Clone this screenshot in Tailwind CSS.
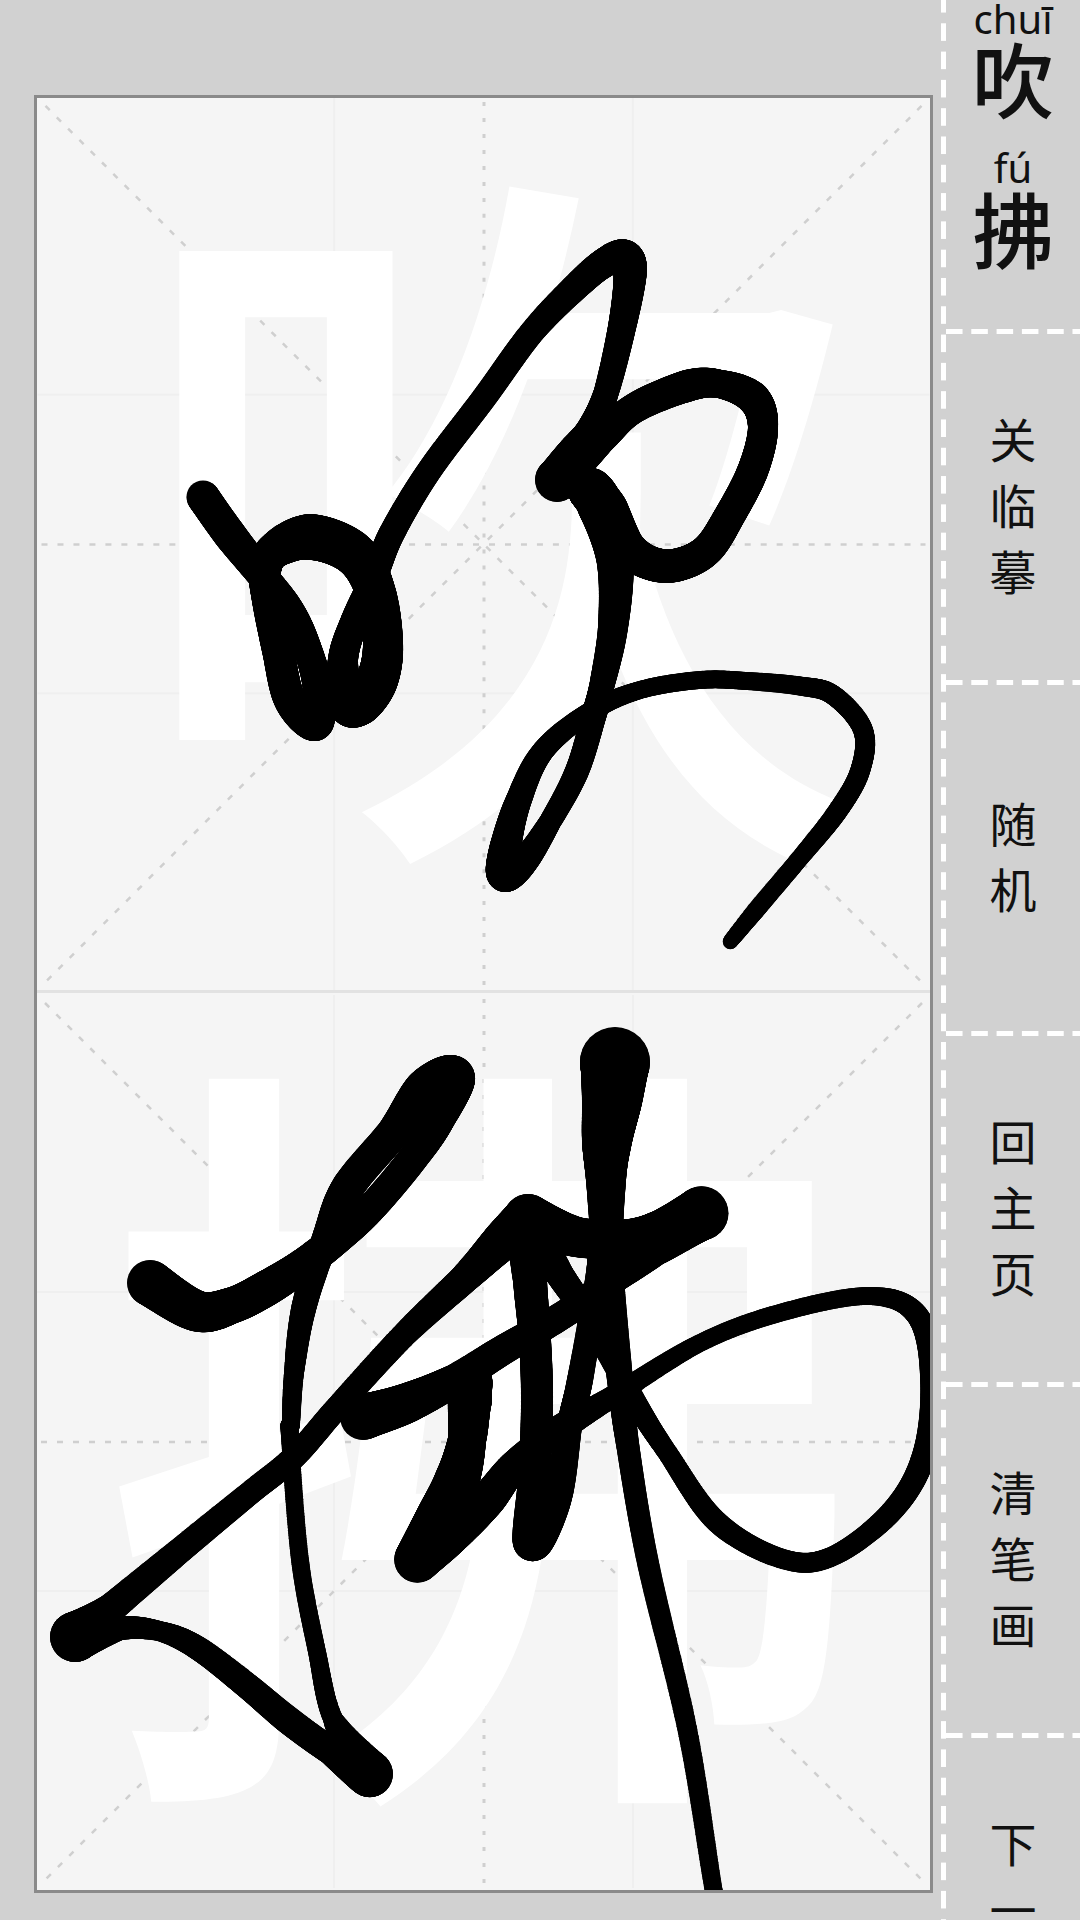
<!DOCTYPE html>
<html lang="zh">
<head>
  <meta charset="UTF-8" />
  <title>临摹</title>
  <script src="https://cdn.jsdelivr.net/npm/@tailwindcss/browser@4"></script>
</head>
<body class="bg-[#d1d1d1] overflow-hidden font-['Noto_Sans','Noto_Sans_CJK_SC',sans-serif] text-[#111]">
  <div class="flex w-[1080px] h-[1920px] overflow-hidden">

    <!-- writing area -->
    <div class="w-[941px] pl-[34px] pt-[95px] shrink-0">
      <div class="relative w-[899px] h-[1798px] border-[3px] border-[#8a8a8a] bg-[#f5f5f5]">

        <div class="relative h-[895px] border-b-[3px] border-[#e2e2e2] overflow-hidden">
          <svg class="absolute inset-0 w-full h-full" viewBox="0 0 893 893" fill="none">
            <g stroke="#efefef" stroke-width="2">
              <path d="M297 0V893M596 0V893M0 297H893M0 596H893" />
            </g>
            <g stroke="#cfcfcf" stroke-width="2.5" stroke-dasharray="6 10">
              <path d="M8 8L885 885M885 8L8 885M4 447H889" />
            </g>
            <path d="M447 4V889" stroke="#cfcfcf" stroke-width="3" stroke-dasharray="4 12" />
          </svg>
          <div class="relative flex items-center justify-center h-full pl-[24px] pb-[120px] text-white text-[730px] leading-none font-['Noto_Sans_CJK_SC',sans-serif] font-medium">吹</div>
        </div>

        <div class="relative h-[897px] overflow-hidden">
          <svg class="absolute inset-0 w-full h-full" viewBox="0 0 893 893" fill="none">
            <g stroke="#efefef" stroke-width="2">
              <path d="M297 0V893M596 0V893M0 297H893M0 596H893" />
            </g>
            <g stroke="#cfcfcf" stroke-width="2.5" stroke-dasharray="6 10">
              <path d="M8 8L885 885M885 8L8 885M4 447H889" />
            </g>
            <path d="M447 4V889" stroke="#cfcfcf" stroke-width="3" stroke-dasharray="4 12" />
          </svg>
          <div class="relative flex items-center justify-center h-full pb-[90px] text-white text-[780px] leading-none font-['Noto_Sans_CJK_SC',sans-serif] font-medium">拂</div>
        </div>

        <canvas id="ink" width="893" height="1792" class="absolute left-0 top-0"></canvas>
      </div>
    </div>

    <!-- side menu -->
    <div class="relative flex-1 pl-[5px]">
      <div class="absolute left-0 top-0 w-[5px] h-full bg-[linear-gradient(#fff_62%,transparent_62%)] bg-[length:5px_28.3px] bg-[position:0_-5px]"></div>

      <div class="relative h-[335px] text-center">
        <div class="h-[150px] leading-none">
          <div class="text-[40px] leading-[40px] -mt-[1px]">chuī</div>
          <div class="text-[82px] leading-[76px] font-medium font-['Noto_Sans_CJK_SC',sans-serif]">吹</div>
        </div>
        <div class="leading-none">
          <div class="text-[40px] leading-[40px] -mt-[1px]">fú</div>
          <div class="text-[82px] leading-[78px] font-medium font-['Noto_Sans_CJK_SC',sans-serif]">拂</div>
        </div>
        <div class="absolute left-0 right-0 bottom-0 h-[5px] bg-[linear-gradient(90deg,#fff_67%,transparent_67%)] bg-[length:25.3px_5px]"></div>
      </div>

      <div class="relative flex items-center justify-center h-[351px] pb-[12px] text-center text-[47px] leading-[66px] font-['Noto_Sans_CJK_SC',sans-serif]">
        <div>关<br>临<br>摹</div>
        <div class="absolute left-0 right-0 bottom-0 h-[5px] bg-[linear-gradient(90deg,#fff_67%,transparent_67%)] bg-[length:25.3px_5px]"></div>
      </div>
      <div class="relative flex items-center justify-center h-[351px] pb-[12px] text-center text-[47px] leading-[66px] font-['Noto_Sans_CJK_SC',sans-serif]">
        <div>随<br>机</div>
        <div class="absolute left-0 right-0 bottom-0 h-[5px] bg-[linear-gradient(90deg,#fff_67%,transparent_67%)] bg-[length:25.3px_5px]"></div>
      </div>
      <div class="relative flex items-center justify-center h-[351px] pb-[12px] text-center text-[47px] leading-[66px] font-['Noto_Sans_CJK_SC',sans-serif]">
        <div>回<br>主<br>页</div>
        <div class="absolute left-0 right-0 bottom-0 h-[5px] bg-[linear-gradient(90deg,#fff_67%,transparent_67%)] bg-[length:25.3px_5px]"></div>
      </div>
      <div class="relative flex items-center justify-center h-[351px] pb-[12px] text-center text-[47px] leading-[66px] font-['Noto_Sans_CJK_SC',sans-serif]">
        <div>清<br>笔<br>画</div>
        <div class="absolute left-0 right-0 bottom-0 h-[5px] bg-[linear-gradient(90deg,#fff_67%,transparent_67%)] bg-[length:25.3px_5px]"></div>
      </div>
      <div class="relative flex items-center justify-center h-[351px] pb-[12px] text-center text-[47px] leading-[66px] font-['Noto_Sans_CJK_SC',sans-serif]">
        <div>下<br>一<br>题</div>
      </div>
    </div>
  </div>

<script>
  // pen strokes as [x, y, width] in page pixels
  const strokes = [
    // chui: mouth radical, then up to the top and down to the blob
    [[203,497,33],[230,535,33],[262,575,30],[290,610,28],[307,647,28],[318,690,30],[315,723,36],[290,700,32],
     [278,650,32],[268,600,32],[265,570,32],[275,550,36],[310,537,46],[353,553,44],[375,590,40],[383,643,40],
     [377,680,42],[360,703,44],[347,703,38],[343,660,30],[355,620,28],[375,575,26],[392,533,26],[429,471,25],
     [484,398,25],[533,331,25],[582,281,28],[609,260,30],[625,258,36],[630,275,33],[622,327,28],[606,393,25],
     [590,430,28],[572,455,34],[557,480,44]],
    // chui: ring, stem, long return
    [[557,480,44],[600,440,30],[633,409,30],[687,386,32],[720,384,28],[753,398,33],[763,427,30],[753,470,31],
     [730,515,31],[707,550,32],[677,565,33],[650,563,34],[627,547,36],[605,510,46],[590,490,44],[600,505,46],
     [615,560,37],[613,627,30],[602,685,25],[594,715,25],[577,771,24],[550,822,22],[525,860,28],[505,874,36],
     [505,850,32],[518,802,26],[543,751,22],[590,712,20],[640,690,18],[700,680,18],[747,681,18],[800,686,19],
     [833,695,20],[863,730,20],[860,771,20],[837,812,20],[800,858,18],[757,909,18],[730,942,15]],
    // fu: hand radical, out to the lower left and back up to the blob
    [[150,1283,46],[197,1311,41],[233,1305,36],[267,1288,36],[300,1267,33],[335,1240,32],[372,1207,30],[417,1153,30],
     [440,1115,34],[453,1078,44],[425,1090,42],[393,1133,33],[348,1187,33],[327,1235,28],[304,1307,25],[294,1373,20],
     [291,1423,18],[290,1437,18],[300,1560,18],[317,1652,18],[333,1719,20],[370,1774,46],[331,1751,28],[288,1720,28],
     [245,1684,26],[196,1647,24],[159,1631,20],[120,1628,24],[75,1637,50],[110,1609,30],[183,1548,26],[250,1493,24],
     [294,1457,24],[337,1408,24],[404,1335,25],[465,1278,30],[503,1240,40],[528,1218,48]],
    // fu: stem and the thin line rising from its foot
    [[528,1218,48],[530,1280,34],[535,1340,32],[537,1400,32],[535,1470,32],[532,1542,38],[557,1497,30],[570,1423,25],
     [580,1380,26],[597,1280,24],[600,1247,24]],
    // fu: short bar
    [[528,1218,48],[577,1237,40],[630,1238,38],[663,1230,42],[702,1213,54]],
    // fu: round the big loop and back to the lower blob
    [[528,1225,40],[560,1275,28],[590,1320,25],[637,1405,22],[667,1452,20],[717,1522,22],[783,1559,20],[833,1556,20],
     [893,1510,22],[925,1452,24],[932,1375,24],[917,1315,22],[870,1296,18],[783,1312,18],[700,1343,18],[607,1400,22],
     [563,1427,28],[517,1463,30],[487,1500,36],[450,1535,40],[417,1560,46]],
    // fu: short thick stroke
    [[477,1380,30],[470,1400,44],[467,1440,38],[457,1480,45],[437,1520,45],[417,1560,46]],
    // fu: left hook to the right blob
    [[363,1417,46],[407,1403,40],[455,1380,32],[503,1350,30],[563,1315,28],[613,1280,28],[655,1250,32],[702,1213,54]],
    // fu: the long vertical
    [[615,1062,70],[612,1100,60],[607,1140,50],[606,1180,40],[608,1260,30],[620,1380,26],[628,1447,23],[648,1563,22],
     [688,1733,20],[714,1892,18],[725,1930,18]],
  ];

  const ctx = document.getElementById("ink").getContext("2d");
  ctx.fillStyle = "#000";

  function dot(x, y, w) {
    ctx.beginPath();
    ctx.arc(x - 37, y - 98, w / 2, 0, Math.PI * 2);
    ctx.fill();
  }

  // catmull-rom through the points, with the width eased along
  function drawStroke(pts) {
    for (let i = 0; i < pts.length - 1; i++) {
      const p0 = pts[Math.max(i - 1, 0)], p1 = pts[i], p2 = pts[i + 1], p3 = pts[Math.min(i + 2, pts.length - 1)];
      for (let t = 0; t < 1; t += 0.02) {
        const t2 = t * t, t3 = t2 * t;
        const at = k => 0.5 * (2 * p1[k] + (p2[k] - p0[k]) * t + (2 * p0[k] - 5 * p1[k] + 4 * p2[k] - p3[k]) * t2 + (3 * p1[k] - p0[k] - 3 * p2[k] + p3[k]) * t3);
        dot(at(0), at(1), p1[2] + (p2[2] - p1[2]) * t);
      }
    }
  }

  strokes.forEach(drawStroke);
</script>
</body>
</html>
